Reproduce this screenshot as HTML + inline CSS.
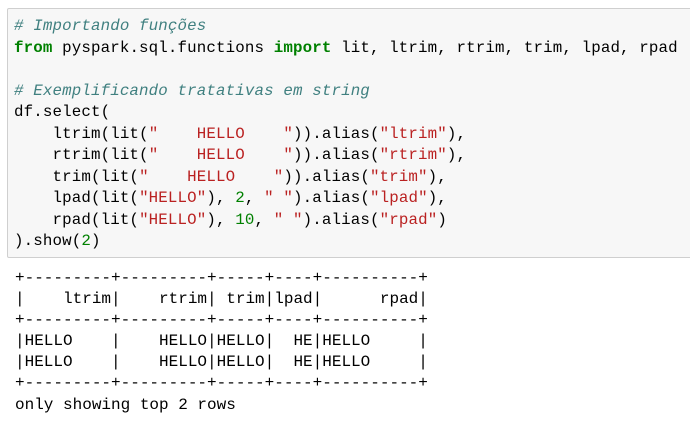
<!DOCTYPE html>
<html><head><meta charset="utf-8"><style>
body{margin:0;background:#fff;width:690px;height:425px;overflow:hidden;font-family:"Liberation Mono",monospace;}
.box{position:absolute;left:7px;top:8px;width:700px;height:248px;background:#f7f7f7;border:1px solid #cfcfcf;border-radius:2px;}
pre{margin:0;font-family:"Liberation Mono",monospace;font-size:15.8px;line-height:21.5px;color:#000;}
.code{position:absolute;left:6px;top:7px;letter-spacing:0.14px;}
.c{color:#408080;font-style:italic}
.k{color:#008000;font-weight:bold}
.s{color:#ba2121}
.n{color:#008000}
.out{position:absolute;left:15px;top:268px;font-size:16px;line-height:21.1px;}
</style></head><body>
<div class="box"><pre class="code"><span class="c"># Importando funções</span>
<span class="k">from</span> pyspark.sql.functions <span class="k">import</span> lit, ltrim, rtrim, trim, lpad, rpad

<span class="c"># Exemplificando tratativas em string</span>
df.select(
    ltrim(lit(<span class="s">"    HELLO    "</span>)).alias(<span class="s">"ltrim"</span>),
    rtrim(lit(<span class="s">"    HELLO    "</span>)).alias(<span class="s">"rtrim"</span>),
    trim(lit(<span class="s">"    HELLO    "</span>)).alias(<span class="s">"trim"</span>),
    lpad(lit(<span class="s">"HELLO"</span>), <span class="n">2</span>, <span class="s">" "</span>).alias(<span class="s">"lpad"</span>),
    rpad(lit(<span class="s">"HELLO"</span>), <span class="n">10</span>, <span class="s">" "</span>).alias(<span class="s">"rpad"</span>)
).show(<span class="n">2</span>)</pre></div>
<pre class="out">+---------+---------+-----+----+----------+
|    ltrim|    rtrim| trim|lpad|      rpad|
+---------+---------+-----+----+----------+
|HELLO    |    HELLO|HELLO|  HE|HELLO     |
|HELLO    |    HELLO|HELLO|  HE|HELLO     |
+---------+---------+-----+----+----------+
only showing top 2 rows</pre>
</body></html>
